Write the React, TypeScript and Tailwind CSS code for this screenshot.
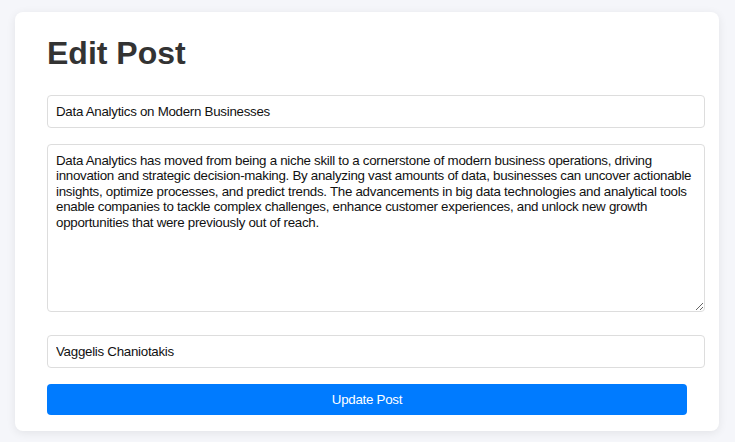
import React from 'react'

const body =
  'Data Analytics has moved from being a niche skill to a cornerstone of modern business operations, driving innovation and strategic decision-making. By analyzing vast amounts of data, businesses can uncover actionable insights, optimize processes, and predict trends. The advancements in big data technologies and analytical tools enable companies to tackle complex challenges, enhance customer experiences, and unlock new growth opportunities that were previously out of reach.'

export default function App() {
  return (
    <div className="min-h-screen bg-[#f5f6fa] pt-[12px] pl-[15px] pr-[16px] font-['Liberation_Sans',Arial,sans-serif]">
      <div className="bg-white rounded-lg shadow-[0_2px_10px_rgba(0,0,0,0.08)] px-8 pt-[23px] pb-4">
        <h1 className="text-[32px] leading-[37px] font-bold text-[#333]">Edit Post</h1>
        <form className="mt-[23px] flex flex-col" onSubmit={(e) => e.preventDefault()}>
          <input
            type="text"
            defaultValue="Data Analytics on Modern Businesses"
            className="w-[658px] h-[33px] px-2 border border-[#ddd] rounded text-[13.333px] leading-[15px] tracking-[-0.28px] text-[#111] outline-none"
          />
          <textarea
            defaultValue={body}
            className="mt-4 w-[658px] h-[168px] p-2 border border-[#ddd] rounded text-[13.333px] leading-[15.4px] tracking-[-0.28px] text-[#111] outline-none"
          />
          <input
            type="text"
            defaultValue="Vaggelis Chaniotakis"
            className="mt-[23px] w-[658px] h-[33px] px-2 border border-[#ddd] rounded text-[13.333px] leading-[15px] tracking-[-0.28px] text-[#111] outline-none"
          />
          <button
            type="submit"
            className="mt-4 w-full h-[31px] bg-[#007bff] text-white text-[13.333px] tracking-[-0.28px] rounded"
          >
            Update Post
          </button>
        </form>
      </div>
    </div>
  )
}
